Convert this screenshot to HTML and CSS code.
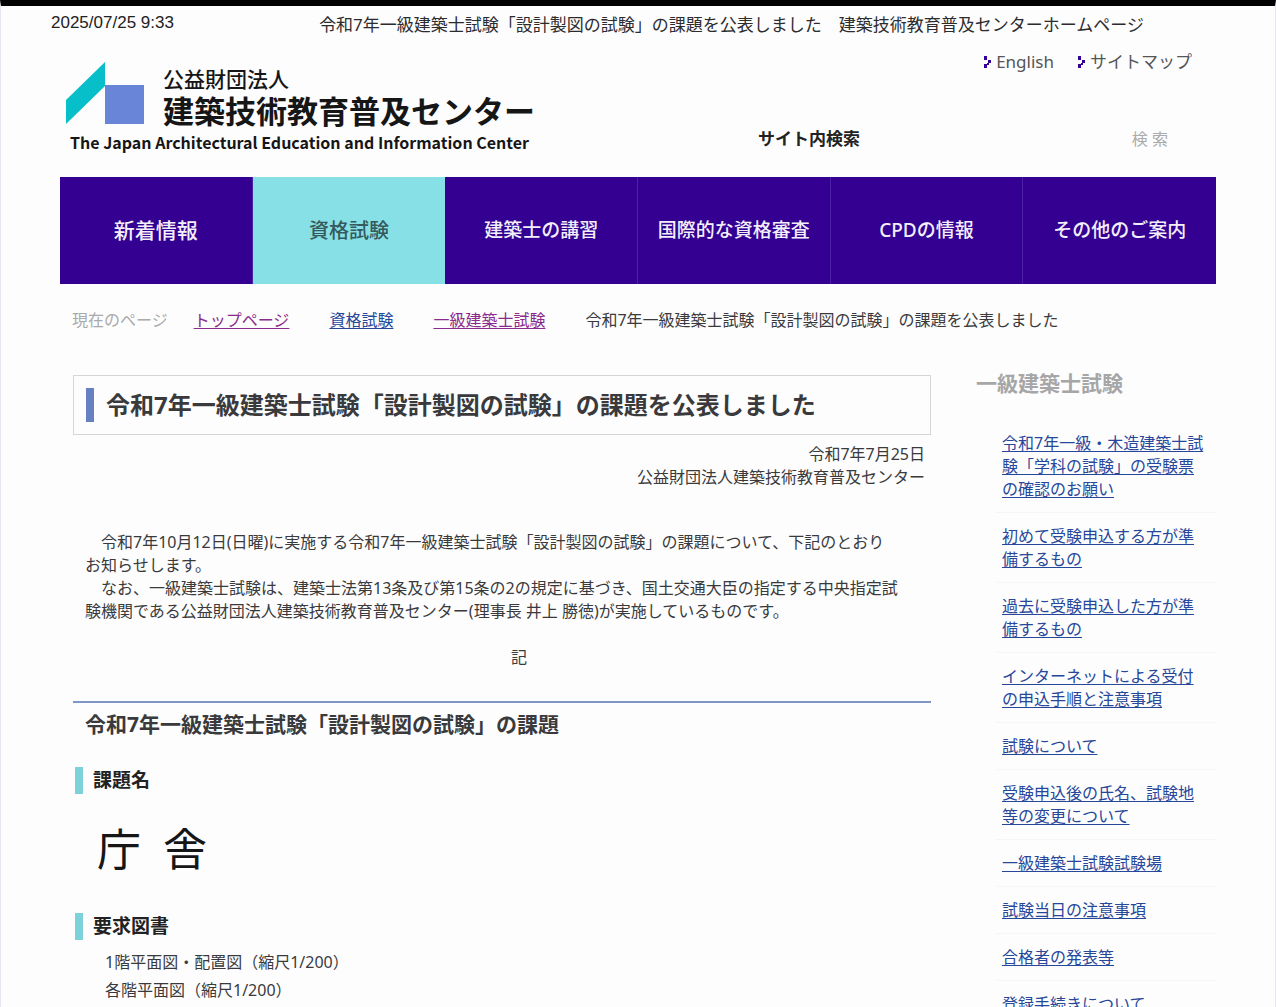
FILE: index.html
```html
<!DOCTYPE html>
<html lang="ja">
<head>
<meta charset="utf-8">
<meta name="viewport" content="width=device-width, initial-scale=1">
<title>令和7年一級建築士試験「設計製図の試験」の課題を公表しました</title>
<link rel="stylesheet" href="styles.css">
</head>
<body>
<div class="page">
  <div class="print-head">
    <time class="print-date">2025/07/25 9:33</time>
    <p class="print-title">令和7年一級建築士試験「設計製図の試験」の課題を公表しました　建築技術教育普及センターホームページ</p>
  </div>

  <header class="site-head">
    <a class="logo" href="#">
      <span class="logo-row">
        <svg class="logo-mark" width="80" height="64" viewBox="0 0 80 64" aria-hidden="true">
          <path d="M0 38 39 0V24L0 62Z" fill="#07bfc9"/>
          <path d="M39 23H78V62H39Z" fill="#6885d8"/>
        </svg>
        <span class="logo-names">
          <span class="logo-kind">公益財団法人</span>
          <span class="logo-name">建築技術教育普及センター</span>
        </span>
      </span>
      <span class="logo-en">The Japan Architectural Education and Information Center</span>
    </a>
    <div class="head-tools">
      <nav class="head-links" aria-label="補助メニュー">
        <a href="#"><svg width="7" height="12" viewBox="0 0 7 12" aria-hidden="true"><path d="M0 0H3V4H0ZM4 4H7V7H4ZM3 7H5V9H3ZM0 8H3V12H0Z" fill="#330099"/></svg>English</a>
        <a href="#"><svg width="7" height="12" viewBox="0 0 7 12" aria-hidden="true"><path d="M0 0H3V4H0ZM4 4H7V7H4ZM3 7H5V9H3ZM0 8H3V12H0Z" fill="#330099"/></svg>サイトマップ</a>
      </nav>
      <form class="search">
        <label for="q">サイト内検索</label>
        <input id="q" type="text">
        <button type="button">検 索</button>
      </form>
    </div>
  </header>

  <nav class="global-nav" aria-label="メインメニュー">
    <a class="nav-news" href="#">新着情報</a>
    <a class="nav-current" href="#">資格試験</a>
    <a href="#">建築士の講習</a>
    <a href="#">国際的な資格審査</a>
    <a href="#">CPDの情報</a>
    <a href="#">その他のご案内</a>
  </nav>

  <nav class="crumbs" aria-label="現在のページ">
    <span class="crumb-label">現在のページ</span>
    <a class="visited" href="#">トップページ</a>
    <a href="#">資格試験</a>
    <a class="visited" href="#">一級建築士試験</a>
    <span>令和7年一級建築士試験「設計製図の試験」の課題を公表しました</span>
  </nav>

  <div class="columns">
    <main class="article">
      <h1><span>令和7年一級建築士試験「設計製図の試験」の課題を公表しました</span></h1>
      <p class="signature">令和7年7月25日<br>公益財団法人建築技術教育普及センター</p>
      <p class="lead">　令和7年10月12日(日曜)に実施する令和7年一級建築士試験「設計製図の試験」の課題について、下記のとおり<br>お知らせします。<br>　なお、一級建築士試験は、建築士法第13条及び第15条の2の規定に基づき、国土交通大臣の指定する中央指定試<br>験機関である公益財団法人建築技術教育普及センター(理事長 井上 勝徳)が実施しているものです。</p>
      <p class="notice-mark">記</p>
      <h2>令和7年一級建築士試験「設計製図の試験」の課題</h2>
      <h3>課題名</h3>
      <p class="subject">庁&ensp;舎</p>
      <h3>要求図書</h3>
      <ul class="drawings">
        <li>1階平面図・配置図（縮尺1/200）</li>
        <li>各階平面図（縮尺1/200）</li>
      </ul>
    </main>

    <aside class="side">
      <h2>一級建築士試験</h2>
      <ul>
        <li><a href="#">令和7年一級・木造建築士試験「学科の試験」の受験票の確認のお願い</a></li>
        <li><a href="#">初めて受験申込する方が準備するもの</a></li>
        <li><a href="#">過去に受験申込した方が準備するもの</a></li>
        <li><a href="#">インターネットによる受付の申込手順と注意事項</a></li>
        <li><a href="#">試験について</a></li>
        <li><a href="#">受験申込後の氏名、試験地等の変更について</a></li>
        <li><a href="#">一級建築士試験試験場</a></li>
        <li><a href="#">試験当日の注意事項</a></li>
        <li><a href="#">合格者の発表等</a></li>
        <li><a href="#">登録手続きについて</a></li>
      </ul>
    </aside>
  </div>
</div>
</body>
</html>
```
FILE: styles.css
```css
* {
  box-sizing: border-box;
}

body,
h1,
h2,
h3,
p,
ul {
  margin: 0;
  padding: 0;
}

ul {
  list-style: none;
}

body {
  background: #fdfdfe;
  color: #3a3a3c;
  font-family: "Noto Sans", "Noto Sans CJK JP", sans-serif;
  font-size: 16px;
  line-height: 23px;
}

.page {
  height: 100vh;
  overflow: hidden;
  padding: 0 59px;
  border: 1px solid #e6e6ee;
  border-top: 6px solid #000;
  border-bottom: 0;
}

/* Printed page header */
.print-head {
  display: flex;
  justify-content: space-between;
  margin: 4px 72px 0 -9px;
  font-size: 17px;
  line-height: 30px;
}

.print-date {
  color: #222;
  font-family: "Liberation Sans", Arial, sans-serif;
  line-height: 26px;
}

.print-title {
  color: #2c2c2e;
}

/* Site header */
.site-head {
  display: flex;
  justify-content: space-between;
  height: 137px;
  padding: 8px 24px 0 6px;
}

.logo {
  display: flex;
  flex-direction: column;
  padding-top: 14px;
  color: #161616;
  text-decoration: none;
  font-family: "Noto Sans CJK JP", sans-serif;
}

.logo-row {
  display: flex;
  gap: 17px;
}

.logo-names {
  display: flex;
  flex-direction: column;
  font-weight: 500;
}

.logo-kind {
  font-size: 21px;
  line-height: 32px;
}

.logo-name {
  font-size: 31px;
  line-height: 32px;
  font-weight: 700;
}

.logo-en {
  margin-left: 4px;
  font-size: 16px;
  line-height: 32px;
  font-weight: 700;
}

.head-tools {
  display: flex;
  flex-direction: column;
  gap: 48px;
  align-items: flex-end;
}

.head-links {
  display: flex;
  gap: 24px;
  font-size: 17px;
  line-height: 28px;
}

.head-links a {
  display: flex;
  gap: 5px;
  align-items: center;
  color: #555;
  text-decoration: none;
}

.search {
  display: flex;
  align-items: center;
  width: 434px;
  padding-right: 24px;
  font-size: 17px;
  line-height: 28px;
}

.search label {
  color: #222;
  font-weight: 700;
}

.search input {
  flex: 1;
  min-width: 0;
  border: 0;
  background: transparent;
  font: inherit;
}

.search button {
  padding: 0;
  border: 0;
  background: transparent;
  color: #aaa;
  font: inherit;
  font-size: 16px;
}

/* Main menu */
.global-nav {
  display: grid;
  grid-template-columns: repeat(6, 1fr);
  height: 107px;
  background: #330091;
}

.global-nav a {
  display: flex;
  align-items: center;
  justify-content: center;
  border-right: 1px solid #4d20a8;
  color: #f2effa;
  text-decoration: none;
  font-size: 19px;
  font-weight: 500;
}

.global-nav a:last-child {
  border-right: 0;
}

.global-nav .nav-news {
  font-size: 21px;
}

.global-nav .nav-current {
  border-right: 0;
  background: #87e0e6;
  color: #35595c;
  font-size: 20px;
}

/* Breadcrumbs */
.crumbs {
  display: flex;
  gap: 40px;
  padding: 25px 0 0 12px;
}

.crumb-label {
  margin-right: -14px;
  color: #aaa;
}

a {
  color: #26479a;
  text-underline-offset: 2px;
}

.visited {
  color: #8a2a8c;
}

/* Article and side menu */
.columns {
  display: grid;
  grid-template-columns: minmax(0, 1fr) 240px;
  gap: 45px;
  padding: 43px 0 0 13px;
}

h1 {
  padding: 12px;
  border: 1px solid #d6d6da;
  font-size: 24px;
  line-height: 34px;
}

h1 span {
  display: block;
  padding-left: 12px;
  border-left: 8px solid #6680c2;
}

.signature {
  padding: 8px 6px 0 0;
  text-align: right;
}

.lead {
  padding: 42px 0 0 12px;
  white-space: nowrap;
}

.notice-mark {
  padding: 23px 0 32px 34px;
  text-align: center;
}

.article h2 {
  padding: 5px 12px 8px;
  border-top: 2px solid #7f97c4;
  font-size: 21px;
  line-height: 32px;
}

h3 {
  margin: 19px 0 0 2px;
  padding-left: 10px;
  border-left: 8px solid #7dd2da;
  color: #222;
  font-size: 19px;
  line-height: 27px;
}

.subject {
  padding: 24px 0 14px 24px;
  color: #161616;
  font-size: 44px;
  line-height: 62px;
}

.drawings {
  padding: 8px 0 0 32px;
  line-height: 28px;
}

.side h2 {
  margin-top: -4px;
  color: #a6a6a6;
  font-size: 21px;
  line-height: 24px;
}

.side ul {
  padding: 25px 0 0 20px;
}

.side li {
  padding: 12px 10px 11px 6px;
  border-bottom: 1px solid #f5f6f9;
}
```
